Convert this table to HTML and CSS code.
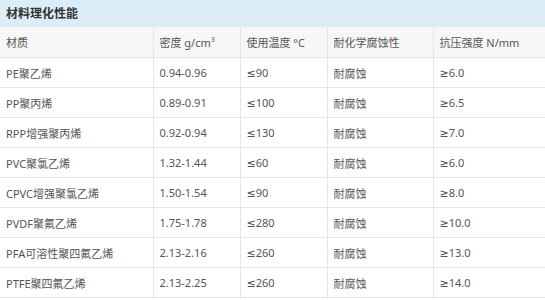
FILE: index.html
```html
<!DOCTYPE html>
<html lang="zh">
<head>
<meta charset="utf-8">
<link rel="stylesheet" href="styles.css">
</head>
<body>
<div class="panel">
  <div class="title">材料理化性能</div>
  <table class="props">
    <colgroup>
      <col class="c1"><col class="c2"><col class="c3"><col class="c4"><col class="c5">
    </colgroup>
    <thead>
      <tr><th>材质</th><th>密度 g/cm<sup>3</sup></th><th>使用温度 °C</th><th>耐化学腐蚀性</th><th>抗压强度 N/mm</th></tr>
    </thead>
    <tbody>
      <tr><td>PE聚乙烯</td><td>0.94-0.96</td><td>≤90</td><td>耐腐蚀</td><td>≥6.0</td></tr>
      <tr><td>PP聚丙烯</td><td>0.89-0.91</td><td>≤100</td><td>耐腐蚀</td><td>≥6.5</td></tr>
      <tr><td>RPP增强聚丙烯</td><td>0.92-0.94</td><td>≤130</td><td>耐腐蚀</td><td>≥7.0</td></tr>
      <tr><td>PVC聚氯乙烯</td><td>1.32-1.44</td><td>≤60</td><td>耐腐蚀</td><td>≥6.0</td></tr>
      <tr><td>CPVC增强聚氯乙烯</td><td>1.50-1.54</td><td>≤90</td><td>耐腐蚀</td><td>≥8.0</td></tr>
      <tr><td>PVDF聚氟乙烯</td><td>1.75-1.78</td><td>≤280</td><td>耐腐蚀</td><td>≥10.0</td></tr>
      <tr><td>PFA可溶性聚四氟乙烯</td><td>2.13-2.16</td><td>≤260</td><td>耐腐蚀</td><td>≥13.0</td></tr>
      <tr><td>PTFE聚四氟乙烯</td><td>2.13-2.25</td><td>≤260</td><td>耐腐蚀</td><td>≥14.0</td></tr>
    </tbody>
  </table>
</div>
</body>
</html>
```
FILE: styles.css
```css
html, body {
  margin: 0;
  padding: 0;
  background: #ffffff;
}
.panel {
  width: 545px;
  font-family: "Noto Sans", "DejaVu Sans", "Noto Sans CJK SC", sans-serif;
  font-size: 11px;
  color: #555555;
}
.title {
  height: 27px;
  line-height: 27px;
  background: #dcedf7;
  padding-left: 6px;
  font-size: 12px;
  font-weight: bold;
  color: #333333;
}
.props {
  width: 545px;
  border-collapse: collapse;
  table-layout: fixed;
}
.c1 { width: 153px; }
.c2 { width: 87px; }
.c3 { width: 87px; }
.c4 { width: 106px; }
.c5 { width: 112px; }
.props th,
.props td {
  text-align: left;
  font-weight: normal;
  padding: 0 6px;
  border-left: 1px solid #e6e6e6;
  border-bottom: 1px solid #e6e6e6;
  white-space: nowrap;
}
.props th:first-child,
.props td:first-child {
  border-left: none;
}
.props th {
  height: 30px;
  background: #f7f7f7;
  color: #555555;
}
.props td {
  height: 29px;
}
.props sup {
  font-size: 7px;
  vertical-align: 5px;
  line-height: 0;
}
```
